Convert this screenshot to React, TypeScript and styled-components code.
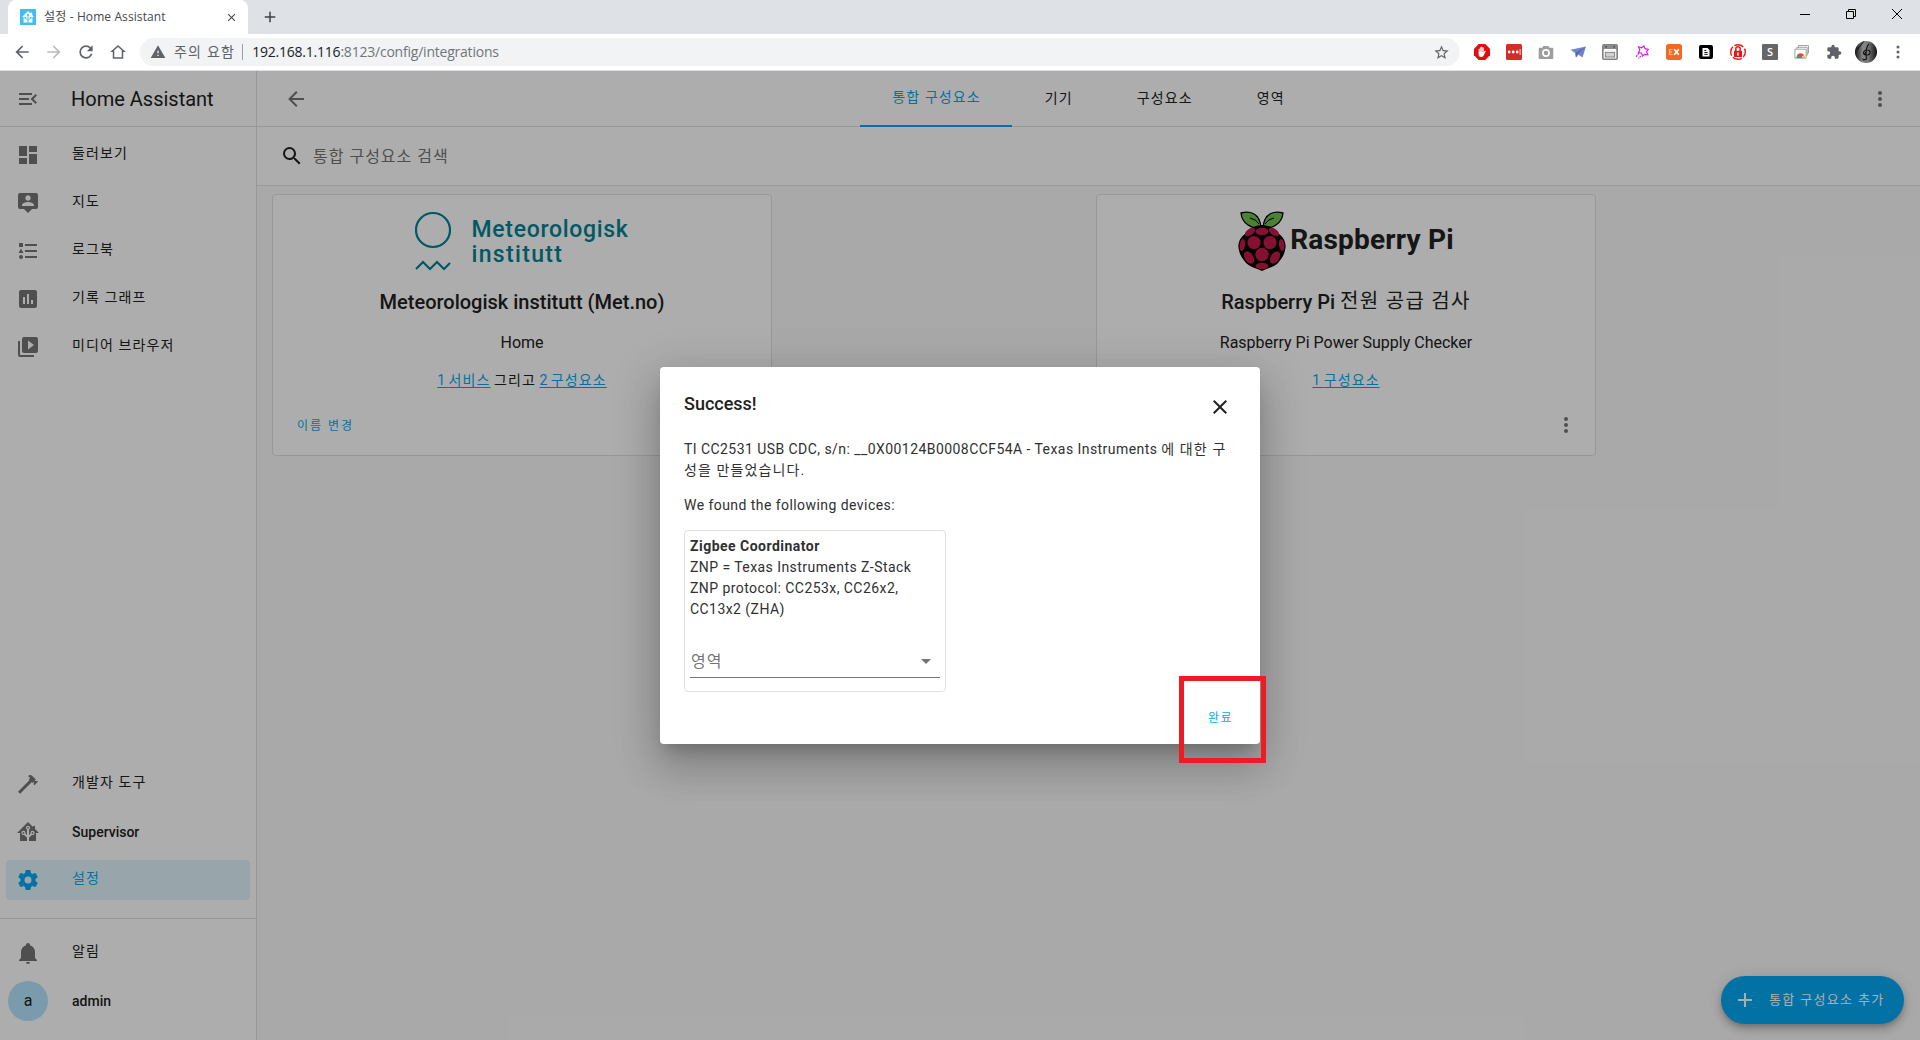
import React from 'react';
import styled, { createGlobalStyle, css } from 'styled-components';

const GlobalStyle = createGlobalStyle`
  * {
    box-sizing: border-box;
  }

  body {
    margin: 0;
    overflow: hidden;
    font-family: Roboto, 'Noto Sans CJK KR', sans-serif;
    font-size: 14px;
    color: #212121;
  }
`;

const icons = {
  menuOpen: 'M21,15.61L19.59,17L14.58,12L19.59,7L21,8.39L17.44,12L21,15.61M3,6H16V8H3V6M3,13V11H13V13H3M3,18V16H16V18H3Z',
  dashboard: 'M13,3V9H21V3M13,21H21V11H13M3,21H11V15H3M3,13H11V3H3V13Z',
  map: 'M20,2H4A2,2 0 0,0 2,4V16A2,2 0 0,0 4,18H8L12,22L16,18H20A2,2 0 0,0 22,16V4A2,2 0 0,0 20,2M12,4.3C13.5,4.3 14.7,5.5 14.7,7C14.7,8.5 13.5,9.7 12,9.7C10.5,9.7 9.3,8.5 9.3,7C9.3,5.5 10.5,4.3 12,4.3M18,15H6V14.1C6,12.1 10,11 12,11C14,11 18,12.1 18,14.1V15Z',
  logbook: 'M5,9.5L7.5,14H2.5L5,9.5M3,4H7V8H3V4M5,20A2,2 0 0,0 7,18A2,2 0 0,0 5,16A2,2 0 0,0 3,18A2,2 0 0,0 5,20M9,5V7H21V5H9M9,19H21V17H9V19M9,11V13H21V11H9Z',
  history: 'M19,3H5A2,2 0 0,0 3,5V19A2,2 0 0,0 5,21H19A2,2 0 0,0 21,19V5A2,2 0 0,0 19,3M9,17H7V10H9V17M13,17H11V7H13V17M17,17H15V13H17V17Z',
  media: 'M4,6H2V20A2,2 0 0,0 4,22H18V20H4V6M20,2H8A2,2 0 0,0 6,4V16A2,2 0 0,0 8,18H20A2,2 0 0,0 22,16V4A2,2 0 0,0 20,2M12,14.5V5.5L18,10L12,14.5Z',
  hammer: 'M2,19.63L13.43,8.2L12.72,7.5L14.14,6.07L12,3.89C13.2,2.7 15.09,2.7 16.27,3.89L19.87,7.5L18.45,8.91H21.29L22,9.62L18.45,13.21L17.74,12.5V9.62L16.27,11.04L15.56,10.33L4.13,21.76L2,19.63Z',
  homeAssistant: 'M21.8,13H20V21H13V17.67L15.79,14.88L16.5,15C17.66,15 18.6,14.06 18.6,12.9C18.6,11.74 17.66,10.8 16.5,10.8A2.1,2.1 0 0,0 14.4,12.9L14.5,13.61L13,15.13V9.65C13.66,9.29 14.1,8.6 14.1,7.8A2.1,2.1 0 0,0 12,5.7A2.1,2.1 0 0,0 9.9,7.8C9.9,8.6 10.34,9.29 11,9.65V15.13L9.5,13.61L9.6,12.9A2.1,2.1 0 0,0 7.5,10.8A2.1,2.1 0 0,0 5.4,12.9A2.1,2.1 0 0,0 7.5,15L8.21,14.88L11,17.67V21H4V13H2.25C1.83,13 1.42,13 1.42,12.79C1.43,12.57 1.85,12.15 2.28,11.72L11,3C11.33,2.67 11.67,2.33 12,2.33C12.33,2.33 12.67,2.67 13,3L17,7V6H19V9L21.78,11.78C22.18,12.18 22.59,12.59 22.6,12.8C22.6,13 22.2,13 21.8,13M7.5,12A0.9,0.9 0 0,1 8.4,12.9A0.9,0.9 0 0,1 7.5,13.8A0.9,0.9 0 0,1 6.6,12.9A0.9,0.9 0 0,1 7.5,12M16.5,12C17,12 17.4,12.4 17.4,12.9C17.4,13.4 17,13.8 16.5,13.8A0.9,0.9 0 0,1 15.6,12.9A0.9,0.9 0 0,1 16.5,12M12,6.9C12.5,6.9 12.9,7.3 12.9,7.8C12.9,8.3 12.5,8.7 12,8.7C11.5,8.7 11.1,8.3 11.1,7.8C11.1,7.3 11.5,6.9 12,6.9Z',
  cog: 'M12,15.5A3.5,3.5 0 0,1 8.5,12A3.5,3.5 0 0,1 12,8.5A3.5,3.5 0 0,1 15.5,12A3.5,3.5 0 0,1 12,15.5M19.43,12.97C19.47,12.65 19.5,12.33 19.5,12C19.5,11.67 19.47,11.34 19.43,11L21.54,9.37C21.73,9.22 21.78,8.95 21.66,8.73L19.66,5.27C19.54,5.05 19.27,4.96 19.05,5.05L16.56,6.05C16.04,5.66 15.5,5.32 14.87,5.07L14.5,2.42C14.46,2.18 14.25,2 14,2H10C9.75,2 9.54,2.18 9.5,2.42L9.13,5.07C8.5,5.32 7.96,5.66 7.44,6.05L4.95,5.05C4.73,4.96 4.46,5.05 4.34,5.27L2.34,8.73C2.21,8.95 2.27,9.22 2.46,9.37L4.57,11C4.53,11.34 4.5,11.67 4.5,12C4.5,12.33 4.53,12.65 4.57,12.97L2.46,14.63C2.27,14.78 2.21,15.05 2.34,15.27L4.34,18.73C4.46,18.95 4.73,19.03 4.95,18.95L7.44,17.94C7.96,18.34 8.5,18.68 9.13,18.93L9.5,21.58C9.54,21.82 9.75,22 10,22H14C14.25,22 14.46,21.82 14.5,21.58L14.87,18.93C15.5,18.67 16.04,18.34 16.56,17.94L19.05,18.95C19.27,19.03 19.54,18.95 19.66,18.73L21.66,15.27C21.78,15.05 21.73,14.78 21.54,14.63L19.43,12.97Z',
  bell: 'M21,19V20H3V19L5,17V11C5,7.9 7.03,5.17 10,4.29C10,4.19 10,4.1 10,4A2,2 0 0,1 12,2A2,2 0 0,1 14,4C14,4.1 14,4.19 14,4.29C16.97,5.17 19,7.9 19,11V17L21,19M14,21A2,2 0 0,1 12,23A2,2 0 0,1 10,21',
  magnify: 'M9.5,3A6.5,6.5 0 0,1 16,9.5C16,11.11 15.41,12.59 14.44,13.73L14.71,14H15.5L20.5,19L19,20.5L14,15.5V14.71L13.73,14.44C12.59,15.41 11.11,16 9.5,16A6.5,6.5 0 0,1 3,9.5A6.5,6.5 0 0,1 9.5,3M9.5,5C7,5 5,7 5,9.5C5,12 7,14 9.5,14C12,14 14,12 14,9.5C14,7 12,5 9.5,5Z',
  arrowLeft: 'M20,11V13H8L13.5,18.5L12.08,19.92L4.16,12L12.08,4.08L13.5,5.5L8,11H20Z',
  arrowRight: 'M4,11V13H16L10.5,18.5L11.92,19.92L19.84,12L11.92,4.08L10.5,5.5L16,11H4Z',
  dots: 'M12,16A2,2 0 0,1 14,18A2,2 0 0,1 12,20A2,2 0 0,1 10,18A2,2 0 0,1 12,16M12,10A2,2 0 0,1 14,12A2,2 0 0,1 12,14A2,2 0 0,1 10,12A2,2 0 0,1 12,10M12,4A2,2 0 0,1 14,6A2,2 0 0,1 12,8A2,2 0 0,1 10,6A2,2 0 0,1 12,4Z',
  close: 'M19,6.41L17.59,5L12,10.59L6.41,5L5,6.41L10.59,12L5,17.59L6.41,19L12,13.41L17.59,19L19,17.59L13.41,12L19,6.41Z',
  plus: 'M19,13H13V19H11V13H5V11H11V5H13V11H19V13Z',
  puzzle: 'M20.5,11H19V7C19,5.89 18.1,5 17,5H13V3.5A2.5,2.5 0 0,0 10.5,1A2.5,2.5 0 0,0 8,3.5V5H4A2,2 0 0,0 2,7V10.8H3.5C5,10.8 6.2,12 6.2,13.5C6.2,15 5,16.2 3.5,16.2H2V20A2,2 0 0,0 4,22H7.8V20.5C7.8,19 9,17.8 10.5,17.8C12,17.8 13.2,19 13.2,20.5V22H17A2,2 0 0,0 19,20V16H20.5A2.5,2.5 0 0,0 23,13.5A2.5,2.5 0 0,0 20.5,11Z',
  refresh: 'M17.65,6.35C16.2,4.9 14.21,4 12,4A8,8 0 0,0 4,12A8,8 0 0,0 12,20C15.73,20 18.84,17.45 19.73,14H17.65C16.83,16.33 14.61,18 12,18A6,6 0 0,1 6,12A6,6 0 0,1 12,6C13.66,6 15.14,6.69 16.22,7.78L13,11H20V4L17.65,6.35Z',
  home: 'M12,2.5L1.5,12H5V21H19V12H22.5L12,2.5M12,5.3L17,9.8V19H7V9.8L12,5.3Z',
  star: 'M12,15.39L8.24,17.66L9.23,13.38L5.91,10.5L10.29,10.13L12,6.09L13.71,10.13L18.09,10.5L14.77,13.38L15.76,17.66M22,9.24L14.81,8.63L12,2L9.19,8.63L2,9.24L7.45,13.97L5.82,21L12,17.27L18.18,21L16.54,13.97L22,9.24Z',
  alert: 'M13,14H11V10H13M13,18H11V16H13M1,21H23L12,2L1,21Z',
  menuDown: 'M7,10L12,15L17,10H7Z',
};

type IconName = keyof typeof icons;

const Svg = styled.svg`
  display: block;
  flex: none;
`;

const Icon: React.FC<{ name: IconName; size?: number }> = ({ name, size = 24 }) => (
  <Svg width={size} height={size} viewBox="0 0 24 24" fill="currentColor" fillRule="evenodd">
    <path d={icons[name]} />
  </Svg>
);

// Hangul runs are set lighter and wider than the latin text around them
const Ko = styled.span<{ $gap?: number; $up?: number }>`
  font-weight: 400;
  letter-spacing: ${({ $gap = 1.1 }) => $gap}px;
  ${({ $up }) => $up && css`
    position: relative;
    top: -${$up}px;
  `}
`;

/* ---------- browser ---------- */

const Screen = styled.div`
  display: flex;
  flex-direction: column;
  width: 1920px;
  height: 1040px;
`;

const TabStrip = styled.div`
  display: flex;
  height: 34px;
  padding-left: 8px;
  background: #dee1e6;
`;

const BrowserTab = styled.div`
  display: flex;
  align-items: center;
  width: 240px;
  padding: 0 10px 0 12px;
  background: #fff;
  border-radius: 8px 8px 0 0;
  color: #45494d;
`;

const TabTitle = styled.span`
  flex: 1;
  margin-left: 8px;
  font: 12px/16px 'Open Sans', 'Noto Sans CJK KR', sans-serif;
  letter-spacing: 0.1px;
  white-space: nowrap;
`;

const NewTab = styled.div`
  display: flex;
  align-items: center;
  margin-left: 13px;
  color: #3c4043;
`;

const WindowButtons = styled.div`
  display: flex;
  margin-left: auto;
  height: 28px;
`;

const WindowButton = styled.div`
  display: flex;
  align-items: center;
  justify-content: center;
  width: 46px;
`;

const Toolbar = styled.div`
  display: flex;
  align-items: center;
  height: 37px;
  padding: 0 6px;
  background: #fff;
  border-bottom: 1px solid #dcdee1;
  color: #5f6368;
`;

const ToolButton = styled.div<{ $disabled?: boolean }>`
  display: flex;
  justify-content: center;
  width: 32px;
  color: ${({ $disabled }) => ($disabled ? '#babcbe' : '#5f6368')};
`;

const AddressBar = styled.div`
  display: flex;
  align-items: center;
  flex: 1;
  height: 28px;
  margin: 0 6px;
  padding: 0 10px;
  background: #f1f3f4;
  border-radius: 14px;
  font: 14px/20px 'Open Sans', 'Noto Sans CJK KR', sans-serif;
`;

const Security = styled.span`
  margin-left: 8px;
  padding-right: 7px;
  border-right: 1px solid #9aa0a6;
  line-height: 16px;
  color: #5f6368;
`;

const Url = styled.span`
  flex: 1;
  margin-left: 9px;
  letter-spacing: -0.22px;
  color: #70757a;

  b {
    font-weight: 400;
    color: #202124;
  }
`;

const Badge = styled.div<{ $bg: string; $size?: number }>`
  display: flex;
  align-items: center;
  justify-content: center;
  width: ${({ $size = 16 }) => $size}px;
  height: ${({ $size = 16 }) => $size}px;
  background: ${({ $bg }) => $bg};
  border-radius: 1px;
  font: 600 11px/16px 'Open Sans', sans-serif;
  color: #fff;
`;

const Profile = styled.div`
  width: 22px;
  height: 22px;
  border-radius: 50%;
  overflow: hidden;
`;

/* ---------- home assistant ---------- */

const Page = styled.div`
  position: relative;
  display: flex;
  flex: 1;
  min-height: 0;
  background: #fafafa;
`;

const Sidebar = styled.aside`
  display: flex;
  flex-direction: column;
  width: 256px;
  background: #fff;
`;

const SidebarHeader = styled.div`
  display: flex;
  align-items: center;
  height: 56px;
  padding-left: 16px;
  border-bottom: 1px solid #e0e0e0;
  color: #757575;
  font-size: 20px;

  span {
    margin-left: 31px;
    color: #212121;
  }
`;

const NavList = styled.nav<{ $push?: boolean }>`
  display: flex;
  flex-direction: column;
  gap: 8px;
  padding: 8px 6px;
  ${({ $push }) => $push && css`
    margin-top: auto;
    padding-bottom: 18px;
  `}
`;

const NavItem = styled.a<{ $active?: boolean }>`
  display: flex;
  align-items: center;
  height: 40px;
  padding-left: 10px;
  border-radius: 4px;
  background: ${({ $active }) => ($active ? 'rgba(3, 169, 244, 0.12)' : 'none')};
  color: ${({ $active }) => ($active ? '#03a9f4' : '#757575')};
`;

const NavLabel = styled.span<{ $active?: boolean }>`
  margin-left: 32px;
  font-weight: 500;
  line-height: 20px;
  color: ${({ $active }) => ($active ? '#03a9f4' : '#212121')};
`;

const NavFooter = styled.div`
  display: flex;
  flex-direction: column;
  gap: 8px;
  padding: 14px 6px 19px;
  border-top: 1px solid #e0e0e0;
`;

const Avatar = styled.div`
  width: 40px;
  height: 40px;
  margin: 0 -8px;
  border-radius: 50%;
  background: #b3e5fc;
  color: #212121;
  font-size: 16px;
  line-height: 40px;
  text-align: center;
`;

const Main = styled.main`
  flex: 1;
  border-left: 1px solid #e0e0e0;
`;

const Header = styled.header`
  display: flex;
  align-items: center;
  justify-content: space-between;
  height: 56px;
  padding: 0 28px 0 27px;
  background: #fff;
  border-bottom: 1px solid #e0e0e0;
  color: #757575;
`;

const Tabs = styled.div`
  display: flex;
  align-self: flex-start;
  height: 56px;
`;

const Tab = styled.div<{ $active?: boolean }>`
  display: flex;
  align-items: center;
  height: 56px;
  padding: 0 31.5px ${({ $active }) => ($active ? 5 : 3)}px 32.5px;
  color: ${({ $active }) => ($active ? '#03a9f4' : '#212121')};
  border-bottom: 2px solid ${({ $active }) => ($active ? '#03a9f4' : 'transparent')};
`;

const SearchRow = styled.div`
  display: flex;
  align-items: center;
  gap: 9px;
  height: 59px;
  padding-left: 23px;
  background: #fff;
  border-bottom: 1px solid #e0e0e0;
  font-size: 16px;

  span {
    color: #757575;
  }
`;

const CardGrid = styled.div`
  display: grid;
  grid-template-columns: 1fr 1fr;
  gap: 16px;
  padding: 8px 16px 16px 15px;
`;

const Card = styled.section`
  display: flex;
  flex-direction: column;
  align-items: center;
  width: 500px;
  height: 262px;
  background: #fff;
  border: 1px solid #e0e0e0;
  border-radius: 4px;
`;

const Brand = styled.div`
  display: flex;
  height: 60px;
  margin-top: 16px;
`;

const MetName = styled.div`
  margin: 6px 0 0 20px;
  color: #008394;
  font: 500 23px/25px Roboto, sans-serif;
  letter-spacing: 0.7px;
`;

const MetNameWide = styled.div`
  letter-spacing: 1.35px;
`;

const PiName = styled.div`
  margin: 11px 0 0 4px;
  font: 700 28px/36px Roboto, sans-serif;
  letter-spacing: 0.2px;
`;

const CardTitle = styled.h2`
  margin: 17px 0 0;
  font-size: 20px;
  font-weight: 500;
  line-height: 28px;
`;

const CardText = styled.p<{ $small?: boolean }>`
  margin: ${({ $small }) => ($small ? 13 : 15)}px 0 0;
  font-size: ${({ $small }) => ($small ? 14 : 16)}px;
  line-height: 24px;
`;

const CardLink = styled.a`
  color: #03a9f4;
  text-decoration: underline;
  text-underline-offset: 2px;
`;

const CardActions = styled.div`
  display: flex;
  align-items: center;
  justify-content: space-between;
  width: 100%;
  height: 24px;
  margin-top: 21px;
  padding: 0 17px 0 24px;
  font-size: 12px;
  color: #757575;
`;

const TextButton = styled.span`
  color: #03a9f4;
`;

const Fab = styled.button`
  position: absolute;
  right: 16px;
  bottom: 16px;
  display: flex;
  align-items: center;
  gap: 12px;
  width: 183px;
  height: 48px;
  padding: 0 0 0 12px;
  border: 0;
  border-radius: 24px;
  background: #03a9f4;
  box-shadow: 0 3px 5px -1px rgba(0, 0, 0, 0.2), 0 6px 10px rgba(0, 0, 0, 0.14), 0 1px 18px rgba(0, 0, 0, 0.12);
  color: #fff;
  font: 500 13px/20px Roboto, 'Noto Sans CJK KR', sans-serif;
  white-space: nowrap;
`;

/* ---------- dialog ---------- */

const Scrim = styled.div`
  position: absolute;
  inset: 0;
  display: flex;
  align-items: center;
  justify-content: center;
  background: rgba(0, 0, 0, 0.32);
`;

const Dialog = styled.div`
  position: relative;
  display: flex;
  flex-direction: column;
  width: 600px;
  height: 377px;
  padding: 0 24px;
  background: #fff;
  border-radius: 4px;
  box-shadow: 0 11px 15px -7px rgba(0, 0, 0, 0.2), 0 24px 38px 3px rgba(0, 0, 0, 0.14), 0 9px 46px 8px rgba(0, 0, 0, 0.12);
  color: #303030;
  letter-spacing: 0.44px;
  line-height: 21px;
`;

const DialogHeader = styled.div`
  display: flex;
  justify-content: space-between;
  height: 52px;
  padding: 28px 4px 0 0;
  color: #212121;
`;

const DialogTitle = styled.h2`
  margin: -5px 0 0;
  font-size: 18px;
  font-weight: 500;
  line-height: 28px;
  letter-spacing: 0;
`;

const DialogText = styled.p<{ $top: number }>`
  margin: ${({ $top }) => $top}px 0 0;
`;

const Device = styled.div`
  width: 262px;
  height: 162px;
  margin-top: 14px;
  padding: 5px;
  border: 1px solid #e0e0e0;
  border-radius: 4px;

  b {
    display: block;
    font-weight: 700;
    letter-spacing: 0.48px;
  }
`;

const AreaSelect = styled.div`
  display: flex;
  align-items: center;
  justify-content: space-between;
  height: 33px;
  margin-top: 25px;
  padding: 0 2px 0 1px;
  border-bottom: 1px solid #757575;
  font-size: 16px;
  color: #757575;
`;

const DialogActions = styled.div`
  display: flex;
  justify-content: flex-end;
  margin-top: 16px;
  padding-right: 3px;
  font-size: 12px;
`;

// annotation drawn over the finish button
const Highlight = styled.div`
  position: absolute;
  left: 519px;
  top: 309px;
  width: 87px;
  height: 87px;
  border: 5px solid #ed1c24;
`;

const navItems: { icon: IconName; label: string }[] = [
  { icon: 'dashboard', label: '둘러보기' },
  { icon: 'map', label: '지도' },
  { icon: 'logbook', label: '로그북' },
  { icon: 'history', label: '기록 그래프' },
  { icon: 'media', label: '미디어 브라우저' },
];

const tabs = ['통합 구성요소', '기기', '구성요소', '영역'];

const Favicon = () => (
  <Svg width="16" height="16" viewBox="0 0 16 16">
    <rect width="16" height="16" fill="#41bdf5" />
    <path d="M8 2 2 8h1.6v5.4h8.8V8H14l-1.8-1.9V3.6h-1.5v1z" fill="#fff" />
    <path d="M8 13.4V6.5M8 11.4 5.4 8.9M8 11.4l2.6-2.5" stroke="#41bdf5" strokeWidth=".9" fill="none" />
    <circle cx="8" cy="6" r="1.1" fill="#41bdf5" />
    <circle cx="5.3" cy="8.8" r="1" fill="#41bdf5" />
    <circle cx="10.7" cy="8.8" r="1" fill="#41bdf5" />
  </Svg>
);

const Extensions = () => (
  <>
    <ToolButton>
      <Svg width="16" height="16" viewBox="0 0 16 16">
        <path d="M4.7 0h6.6L16 4.7v6.6L11.3 16H4.7L0 11.3V4.7z" fill="#e40d0d" />
        <path d="M4.6 8.2V5.4a.6.6 0 0 1 1.2 0V4a.6.6 0 0 1 1.3 0v-.7a.6.6 0 0 1 1.3 0V4a.6.6 0 0 1 1.3 0v4.2l1-1.2c.5-.5 1.2 0 .9.6l-1.8 3.6c-.6 1.2-1.3 1.8-2.6 1.8-1.8 0-2.6-1.3-2.6-2.8z" fill="#fff" />
        <path d="M5.8 5v3M7.1 4v4M8.4 4v4" stroke="#e40d0d" strokeWidth=".3" />
      </Svg>
    </ToolButton>
    <ToolButton>
      <Svg width="16" height="16" viewBox="0 0 16 16">
        <rect width="16" height="16" rx="1.5" fill="#d32d27" />
        <g fill="#fff">
          <circle cx="3.2" cy="8" r="1.4" />
          <circle cx="7.2" cy="8" r="1.4" />
          <circle cx="11.2" cy="8" r="1.4" />
          <rect x="13.7" y="5" width=".8" height="6" />
        </g>
      </Svg>
    </ToolButton>
    <ToolButton>
      <Svg width="16" height="16" viewBox="0 0 16 16">
        <path d="M1.7 3.7h2.6l1-1.7h5.2l1 1.7h2.8q1 0 1 1V14q0 1-1 1H1.7q-1 0-1-1V4.7q0-1 1-1z" fill="#9e9e9e" />
        <circle cx="8" cy="9" r="3.1" fill="none" stroke="#fff" strokeWidth="1.7" />
      </Svg>
    </ToolButton>
    <ToolButton>
      <Svg width="16" height="16" viewBox="0 0 16 16">
        <path d="M.5 5.8 16 2.5 12.5 13.5 8.5 10.8 6 13.8 5.4 9.3z" fill="#7285c8" />
        <path d="M5.4 9.3 16 2.5 6.8 10.4 6 13.8z" fill="#4b5fa5" />
      </Svg>
    </ToolButton>
    <ToolButton>
      <Svg width="16" height="16" viewBox="0 0 16 16">
        <rect x=".8" y=".8" width="14.4" height="14.4" rx="1" fill="#f2f2f2" stroke="#828282" strokeWidth="1.6" />
        <path d="M1 1h14v5H1z" fill="#8c8c8c" />
        <path d="M3 2h2v1.5H3zM11 2h2v1.5h-2z" fill="#555" />
        <path d="M2 5h12v1.2H2z" fill="#fff" />
        <rect x="3.4" y="8.4" width="9.2" height="4.6" fill="#d0d0d0" stroke="#828282" strokeWidth=".9" />
      </Svg>
    </ToolButton>
    <ToolButton>
      <Svg width="16" height="16" viewBox="0 0 16 16" fill="none" stroke="#d91eea" strokeWidth="1.2">
        <path d="m4.5 2.8 3 1L10 2l1 2.700 3.300.6-1.800 2.500 1.300 3-3.300-.5-2 1.900-.8-3L4.500 8.500 5.800 6z" />
        <path d="M4.800 9 2 13M7 12l-2.500 2.500" strokeDasharray="2 .7" />
      </Svg>
    </ToolButton>
    <ToolButton>
      <Svg width="16" height="16" viewBox="0 0 16 16">
        <rect width="16" height="16" rx="2.5" fill="#f06a25" />
        <path d="M3 5.5h3.5M3 8h3M3 10.500h3.500M3.500 5v6" stroke="#f9bf9c" strokeWidth="1.2" />
        <path d="m8.2 5.300 4.600 5.400M12.800 5.300l-4.600 5.400" stroke="#fff" strokeWidth="1.7" />
      </Svg>
    </ToolButton>
    <ToolButton>
      <Svg width="16" height="16" viewBox="0 0 16 16">
        <rect x="1" y="1" width="14" height="14" rx="2" fill="#000" />
        <path d="M4.500 4h5l2 2v6.500h-7z" fill="#fff" />
        <path d="M6.300 6.500h2M6.300 8.500h3.400M6.300 10.400h3.400" stroke="#000" strokeWidth=".9" />
      </Svg>
    </ToolButton>
    <ToolButton>
      <Svg width="16" height="16" viewBox="0 0 16 16" fill="none" stroke="#f11313">
        <circle cx="8" cy="8" r="7.300" strokeWidth="1.400" strokeDasharray="9.500 2" strokeDashoffset="4" />
        <path d="M5.800 7V5a2.200 2.200 0 0 1 4.400 0v2" strokeWidth="1.500" />
        <path d="M4 6.800h8V13H4z" fill="#f11313" stroke="none" />
        <path d="M7 8.500h2L8.400 10l.8 1.500H7z" fill="#fff" stroke="none" />
      </Svg>
    </ToolButton>
    <ToolButton>
      <Badge $bg="#666">S</Badge>
    </ToolButton>
    <ToolButton>
      <Svg width="16" height="16" viewBox="0 0 16 16">
        <g fill="#fff" stroke="#999" strokeWidth=".9">
          <path d="M4.500 1.500h10v7.500h-10z" />
          <path d="M2.800 3.300h10.400v8H2.800z" />
          <path d="M.9 5.200h11.200v9H.9z" />
        </g>
        <path d="M2.300 14a4.300 4.300 0 0 1 2.200-3.700L6.300 14z" fill="#34a853" />
        <path d="M3 11.300a4.300 4.300 0 0 1 7.200 0L6.500 13.500z" fill="#ea4335" />
        <path d="M10.200 11.300A4.300 4.300 0 0 1 10.900 14H6.500z" fill="#fbbc05" />
        <path d="M4.800 14a1.800 1.800 0 0 1 3.600 0z" fill="#4285f4" />
      </Svg>
    </ToolButton>
    <ToolButton>
      <Icon name="puzzle" size={16} />
    </ToolButton>
    <ToolButton>
      <Profile>
        <Svg width="22" height="22" viewBox="0 0 22 22">
          <defs>
            <linearGradient id="profile">
              <stop offset="0" stopColor="#111" />
              <stop offset=".35" stopColor="#888" />
              <stop offset=".6" stopColor="#777" />
              <stop offset="1" stopColor="#111" />
            </linearGradient>
          </defs>
          <rect width="22" height="22" fill="url(#profile)" />
          <path d="m2 9 7-9M14 3q-4 4-2.500 15-4 2-3.500-.5M11 14c-4 0-3-5 1-5s4 5 0 5-2-3 0-3" stroke="#151515" strokeWidth="1.100" fill="none" />
        </Svg>
      </Profile>
    </ToolButton>
    <ToolButton>
      <Svg width="16" height="16" viewBox="0 0 16 16" fill="currentColor">
        <circle cx="8" cy="3" r="1.500" />
        <circle cx="8" cy="8" r="1.500" />
        <circle cx="8" cy="13" r="1.500" />
      </Svg>
    </ToolButton>
  </>
);

const BrowserChrome = () => (
  <>
    <TabStrip>
      <BrowserTab>
        <Favicon />
        <TabTitle>
          <Ko $gap={0.2}>설정</Ko> - Home Assistant
        </TabTitle>
        <Icon name="close" size={13} />
      </BrowserTab>
      <NewTab>
        <Icon name="plus" size={18} />
      </NewTab>
      <WindowButtons>
        <WindowButton>
          <Svg width="10" height="10" stroke="#000">
            <path d="M0 5.500h10" />
          </Svg>
        </WindowButton>
        <WindowButton>
          <Svg width="10" height="10" stroke="#000" fill="none">
            <path d="M.5 2.500h7v7h-7zM2.500 2.500v-2h7v7h-2" />
          </Svg>
        </WindowButton>
        <WindowButton>
          <Svg width="10" height="10" stroke="#000">
            <path d="m0 0 10 10M10 0 0 10" />
          </Svg>
        </WindowButton>
      </WindowButtons>
    </TabStrip>
    <Toolbar>
      <ToolButton>
        <Icon name="arrowLeft" size={20} />
      </ToolButton>
      <ToolButton $disabled>
        <Icon name="arrowRight" size={20} />
      </ToolButton>
      <ToolButton>
        <Icon name="refresh" size={20} />
      </ToolButton>
      <ToolButton>
        <Icon name="home" size={18} />
      </ToolButton>
      <AddressBar>
        <Icon name="alert" size={16} />
        <Security>
          <Ko $gap={1.2}>주의 요함</Ko>
        </Security>
        <Url>
          <b>192.168.1.116</b>:8123/config/integrations
        </Url>
        <Icon name="star" size={17} />
      </AddressBar>
      <Extensions />
    </Toolbar>
  </>
);

const MetLogo = () => (
  <Svg width="36" height="60" viewBox="0 0 36 60" fill="none" stroke="#008394">
    <circle cx="18" cy="19" r="17" strokeWidth="2.200" />
    <path d="m1 58 7-7 7 7 7-7 7 7 6-6" strokeWidth="2.200" />
  </Svg>
);

const PiLogo = () => (
  <Svg width="48" height="60" viewBox="0 0 48 60">
    <g fill="#6cc04a" stroke="#000" strokeWidth="1.300">
      <path d="M23 17C14 18 4 13 3 2c8-2 19-1 20 15z" />
      <path d="M25 17c9 1 19-4 20-15-8-2-19-1-20 15z" />
    </g>
    <path d="M24 14c6 0 13 3 16.500 8.500C46 26 49 33 47 39c-1 6-4 9-7 13-4 4-10 5-16 8-6-3-12-4-16-8-3-4-6-7-7-13-2-6 1-13 6.500-16.500C11 17 18 14 24 14z" fill="#000" />
    <path d="M12 7q6 1 9 6M36 7q-6 1-9 6" stroke="#000" fill="none" />
    <g fill="#c51a4a">
      <ellipse cx="24" cy="20.500" rx="6.500" ry="3.800" />
      <ellipse cx="12" cy="21" rx="5.800" ry="3.200" transform="rotate(-35 12 21)" />
      <ellipse cx="36" cy="21" rx="5.800" ry="3.200" transform="rotate(35 36 21)" />
      <circle cx="16" cy="31.500" r="6.600" />
      <circle cx="32" cy="31.500" r="6.600" />
      <ellipse cx="4.300" cy="34" rx="2.700" ry="6" transform="rotate(8 4.300 34)" />
      <ellipse cx="43.700" cy="34" rx="2.700" ry="6" transform="rotate(-8 43.700 34)" />
      <circle cx="24" cy="43.500" r="6.800" />
      <ellipse cx="11" cy="46.500" rx="4.300" ry="6.800" transform="rotate(-33 11 46.500)" />
      <ellipse cx="37" cy="46.500" rx="4.300" ry="6.800" transform="rotate(33 37 46.500)" />
      <ellipse cx="24" cy="55" rx="6.500" ry="3.200" />
    </g>
  </Svg>
);

const App: React.FC = () => (
  <Screen>
    <GlobalStyle />
    <BrowserChrome />
    <Page>
      <Sidebar>
        <SidebarHeader>
          <Icon name="menuOpen" />
          <span>Home Assistant</span>
        </SidebarHeader>
        <NavList>
          {navItems.map((item) => (
            <NavItem key={item.label}>
              <Icon name={item.icon} />
              <NavLabel>
                <Ko $up={2}>{item.label}</Ko>
              </NavLabel>
            </NavItem>
          ))}
        </NavList>
        <NavList $push>
          <NavItem>
            <Icon name="hammer" />
            <NavLabel>
              <Ko $up={2}>개발자 도구</Ko>
            </NavLabel>
          </NavItem>
          <NavItem>
            <Icon name="homeAssistant" />
            <NavLabel>Supervisor</NavLabel>
          </NavItem>
          <NavItem $active>
            <Icon name="cog" />
            <NavLabel $active>
              <Ko $up={2}>설정</Ko>
            </NavLabel>
          </NavItem>
        </NavList>
        <NavFooter>
          <NavItem>
            <Icon name="bell" />
            <NavLabel>
              <Ko $up={2}>알림</Ko>
            </NavLabel>
          </NavItem>
          <NavItem>
            <Avatar>a</Avatar>
            <NavLabel>admin</NavLabel>
          </NavItem>
        </NavFooter>
      </Sidebar>
      <Main>
        <Header>
          <Icon name="arrowLeft" />
          <Tabs>
            {tabs.map((tab, i) => (
              <Tab key={tab} $active={i === 0}>
                <Ko>{tab}</Ko>
              </Tab>
            ))}
          </Tabs>
          <Icon name="dots" />
        </Header>
        <SearchRow>
          <Icon name="magnify" />
          <Ko $gap={1} $up={1}>통합 구성요소 검색</Ko>
        </SearchRow>
        <CardGrid>
          <Card>
            <Brand>
              <MetLogo />
              <MetName>
                Meteorologisk
                <MetNameWide>institutt</MetNameWide>
              </MetName>
            </Brand>
            <CardTitle>Meteorologisk institutt (Met.no)</CardTitle>
            <CardText>Home</CardText>
            <CardText $small>
              <CardLink>1 <Ko>서비스</Ko></CardLink> <Ko>그리고</Ko> <CardLink>2 <Ko>구성요소</Ko></CardLink>
            </CardText>
            <CardActions>
              <TextButton>
                <Ko $gap={2} $up={1}>이름 변경</Ko>
              </TextButton>
            </CardActions>
          </Card>
          <Card>
            <Brand>
              <PiLogo />
              <PiName>Raspberry Pi</PiName>
            </Brand>
            <CardTitle>
              Raspberry Pi <Ko $gap={1.3} $up={1}>전원 공급 검사</Ko>
            </CardTitle>
            <CardText>Raspberry Pi Power Supply Checker</CardText>
            <CardText $small>
              <CardLink>1 <Ko>구성요소</Ko></CardLink>
            </CardText>
            <CardActions>
              <span />
              <Icon name="dots" />
            </CardActions>
          </Card>
        </CardGrid>
        <Fab>
          <Icon name="plus" />
          <Ko $gap={1.35}>통합 구성요소 추가</Ko>
        </Fab>
      </Main>
      <Scrim>
        <Dialog>
          <DialogHeader>
            <DialogTitle>Success!</DialogTitle>
            <Icon name="close" />
          </DialogHeader>
          <DialogText $top={20}>
            TI CC2531 USB CDC, s/n: __0X00124B0008CCF54A - Texas Instruments <Ko>에 대한 구</Ko>
            <br />
            <Ko>성을 만들었습니다.</Ko>
          </DialogText>
          <DialogText $top={14}>We found the following devices:</DialogText>
          <Device>
            <b>Zigbee Coordinator</b>
            ZNP = Texas Instruments Z-Stack
            <br />
            ZNP protocol: CC253x, CC26x2,
            <br />
            CC13x2 (ZHA)
            <AreaSelect>
              <Ko>영역</Ko>
              <Icon name="menuDown" />
            </AreaSelect>
          </Device>
          <DialogActions>
            <TextButton>
              <Ko $gap={1.5}>완료</Ko>
            </TextButton>
          </DialogActions>
          <Highlight />
        </Dialog>
      </Scrim>
    </Page>
  </Screen>
);

export default App;
